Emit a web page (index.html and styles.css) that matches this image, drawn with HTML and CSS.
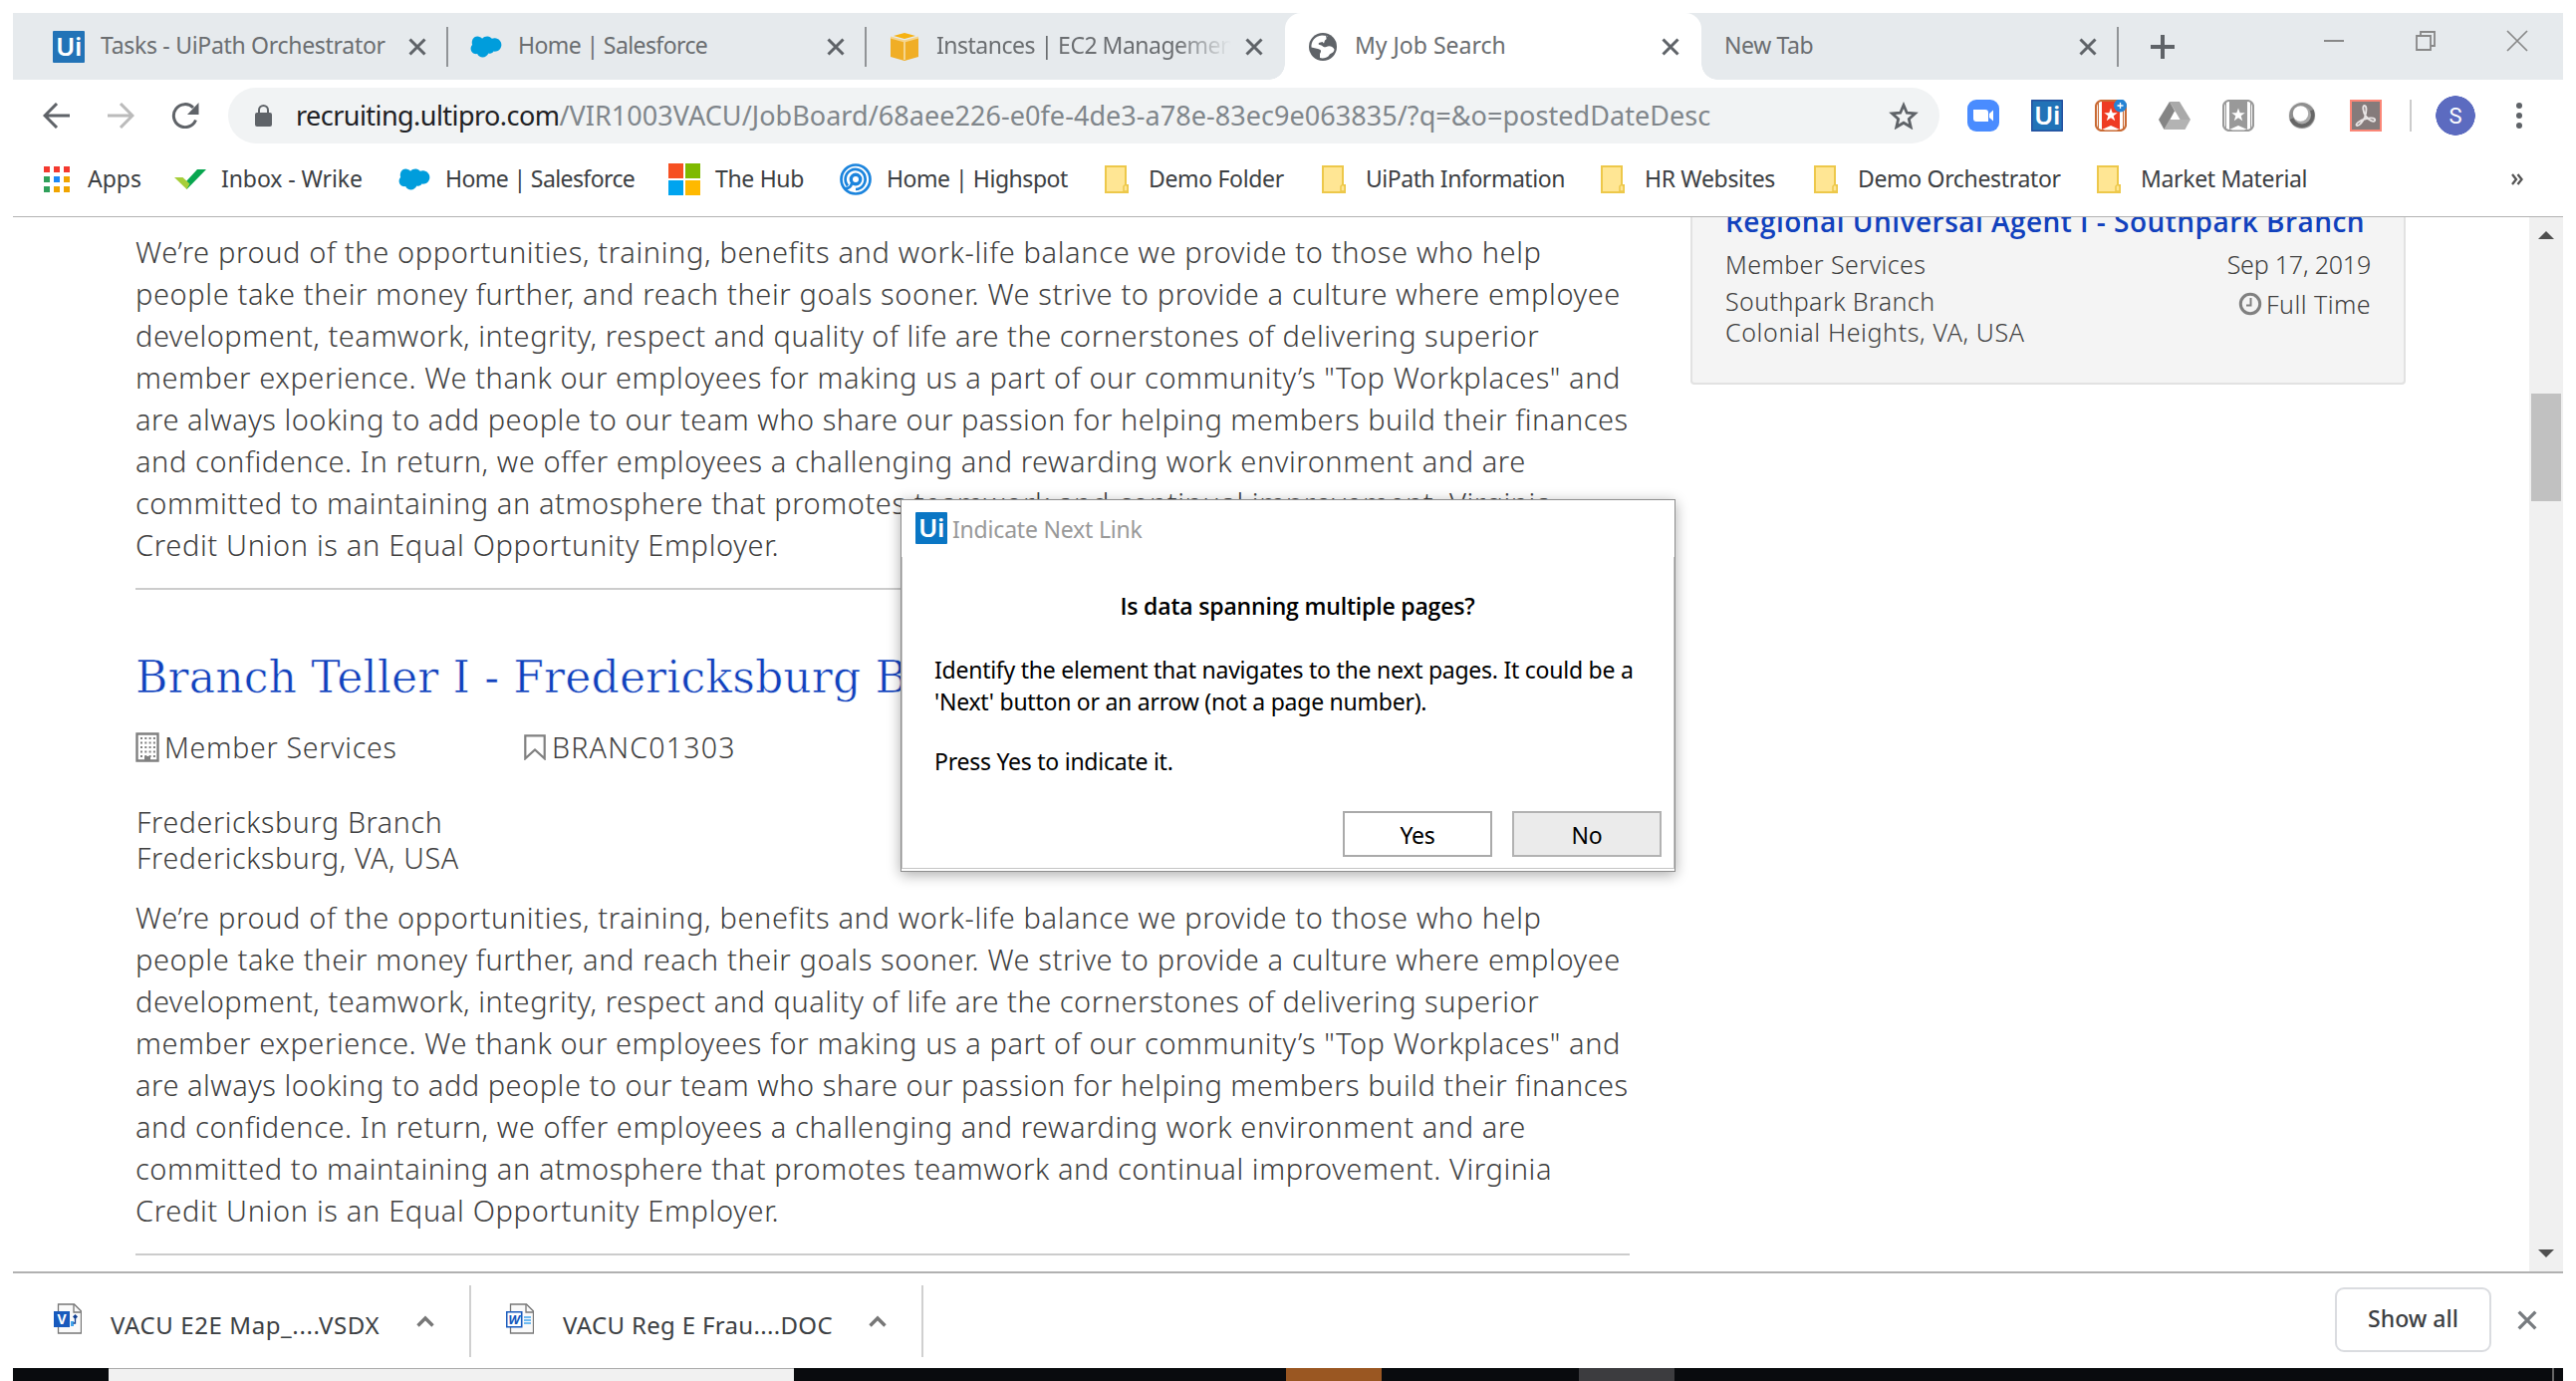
FILE: index.html
```html
<!DOCTYPE html>
<html lang="en">
<head>
<meta charset="utf-8">
<title>My Job Search</title>
<link rel="stylesheet" href="styles.css">
</head>
<body>
<svg width="0" height="0" class="defs">
  <symbol id="cross" viewBox="0 0 18 18"><path d="M1.500 1.500l15 15M16.500 1.500l-15 15" fill="none" stroke="currentColor" stroke-width="3"/></symbol>
  <symbol id="cloud" viewBox="0 0 32 24"><path d="M13.300 3.200C14.700 1.700 16.500.900 18.500 1c1.800.100 3.300 1 4.200 2.300 1-.500 2-.700 3-.600 3.500.200 6.300 3.200 6.200 7-.200 4.200-3.600 7-7.600 6.400-.900 1.800-2.900 2.700-4.900 1.900C18.500 20.200 16.300 22 13.800 22c-2.300 0-4.300-1.300-5.200-3.400C4.800 19.200 2.300 16.400 2.300 13.300c0-1.400.500-2.800 1.500-3.800C2.600 5.800 4.500 1 8.700 1c1.900.100 3.500.900 4.600 2.200z" transform="translate(-1.800 .5) scale(1.04 1)" fill="#009ddc"/></symbol>
  <symbol id="folder" viewBox="0 0 24 28"><path d="M1 1h20v19h2v7H1z" fill="#ffe694" stroke="#edc84a" stroke-width="2"/><path d="M19 26v-5l2-2 2 2v5z" fill="#ffe694" stroke="#edc84a" stroke-width="1.500"/></symbol>
  <symbol id="caret" viewBox="0 0 18 12"><path d="M1.500 10.500 9 3l7.500 7.500" fill="none" stroke="currentColor" stroke-width="3.400"/></symbol>
  <symbol id="sheet" viewBox="0 0 28 31"><path d="M4.500 1h16l7 7v22h-23z" fill="#fafafa" stroke="#777" stroke-width="1.300"/><path d="M20 1v8h7.500" fill="none" stroke="#777" stroke-width="1.300"/></symbol>
  <symbol id="wunder" viewBox="0 0 32 32"><rect x="1" y="1" width="30" height="30" rx="6" fill="#fff" stroke="var(--edge)" stroke-width="2.200"/><path d="M3.500 3v26M28.500 3v26" stroke="var(--edge)" stroke-width="1"/><path d="M7 2h18v28l-9-4-9 4z" fill="var(--fill)"/><path d="m16 8.500 1.700 4.800h5l-4 3 1.500 5-4.200-3-4.200 3 1.500-5-4-3h5z" fill="#fff"/><path d="M9 30.500 16 27l7 3.500" fill="#fff"/></symbol>
</svg>

<div class="desktop">
  <header class="tabs">
    <div class="tab tab-first"><span class="ui">Ui</span><span class="label t-tasks">Tasks - UiPath Orchestrator</span><svg class="close"><use href="#cross"/></svg></div>
    <div class="tab"><svg width="32" height="24"><use href="#cloud"/></svg><span class="label t-home">Home | Salesforce</span><svg class="close"><use href="#cross"/></svg></div>
    <div class="tab bare"><svg width="32" height="30" viewBox="0 0 32 30"><path d="M2 5.500 16 9v20L2 25zM30 5.500 16 9v20l14-4z" fill="#f0ae26"/><path d="M5 4 16 1l11 3-11 3z" fill="#f7b211"/><path d="m2 5.500 14 4 14-4M16 9v19" fill="none" stroke="#f5d58c" stroke-width="2"/></svg><span class="label fade t-ec2">Instances | EC2 Management</span><svg class="close"><use href="#cross"/></svg></div>
    <div class="tab active"><svg width="32" height="30" viewBox="0 0 32 30"><circle cx="16" cy="15" r="14" fill="#5f6368"/><path d="M15 3.500c-7 .500-11 6-10.500 12L11 17c2 .500 3.500 1 3 3l-1 2v4c3 1 7 0 9-2 1-3 5-2 5.500-6.500-2-3-5-4-8-2.500-2 1-3.500-.500-5-1.500-2.500-.500-3.500-1-2.500-2.500l3.500-1 1.500 1.500 1-3c2-1.500 4-3 2.500-4.500z" fill="#fff"/><path d="M19 3.500 25 7l2 6-4 1-4-2 1-3z" fill="#5f6368"/></svg><span class="label t-job">My Job Search</span><svg class="close"><use href="#cross"/></svg></div>
    <div class="tab last"><span class="label t-new">New Tab</span><svg class="close"><use href="#cross"/></svg></div>
    <svg class="plus" width="24" height="24" viewBox="0 0 24 24"><path d="M12 0v24M0 12h24" stroke="#5f6368" stroke-width="4"/></svg>
    <div class="window-buttons">
      <svg viewBox="0 0 20 20"><path d="M0 10h20" stroke="#888" stroke-width="2"/></svg>
      <svg viewBox="0 0 20 20"><path d="M1 5h14v14H1zM5 5V1h14v14h-4" fill="none" stroke="#888" stroke-width="1.800"/></svg>
      <svg viewBox="0 0 20 20"><path d="m0 0 20 20M20 0 0 20" stroke="#888" stroke-width="1.700"/></svg>
    </div>
  </header>

  <div class="toolbar">
    <svg class="back" viewBox="0 0 28 26"><path d="M27 13H2M14 1 2 13l12 12" fill="none" stroke="#5f6368" stroke-width="3"/></svg>
    <svg class="forward" viewBox="0 0 28 26"><path d="M1 13h25M14 1l12 12-12 12" fill="none" stroke="#bbb" stroke-width="3"/></svg>
    <svg class="reload" viewBox="0 0 28 26"><path d="M24.500 17.500A11.500 11.500 0 1 1 22 5" fill="none" stroke="#5f6368" stroke-width="3"/><path d="M27.500 0v12H16z" fill="#5f6368"/></svg>
    <div class="address">
      <svg class="lock" viewBox="0 0 17 22"><rect y="8" width="17" height="14" rx="2" fill="#5f6368"/><path d="M4 9V5.500a4.500 4.500 0 0 1 9 0V9" fill="none" stroke="#5f6368" stroke-width="2"/></svg>
      <span class="host">recruiting.ultipro.com</span><span class="path">/VIR1003VACU/JobBoard/68aee226-e0fe-4de3-a78e-83ec9e063835/?q=&amp;o=postedDateDesc</span>
      <svg class="star" viewBox="0 0 30 28"><path d="m15 3.500 3.300 7.700 8.200.700-6.200 5.500 1.900 8.100-7.200-4.300-7.200 4.300 1.900-8.100L3.500 11.900l8.200-.7z" fill="none" stroke="#5f6368" stroke-width="2.800"/></svg>
    </div>
    <div class="extensions">
      <svg viewBox="0 0 32 32"><rect width="32" height="32" rx="9" fill="#4a8cff"/><path d="M6 10h12q3 0 3 3v9H9q-3 0-3-3zM22 14l4-3.500v11L22 18z" fill="#fff"/></svg>
      <span class="ui deep">Ui</span>
      <svg class="red" viewBox="0 0 32 32"><use href="#wunder"/><circle cx="25.500" cy="6" r="6.500" fill="#2483d5"/><path d="M25.500 3v6M22.500 6h6" stroke="#fff" stroke-width="1.300"/></svg>
      <svg viewBox="0 0 32 32"><path d="M11 2h10l11 18h-10.500z" fill="#a9a9a9"/><path d="M11 2 0 20l5.500 10 11-18z" fill="#858585"/><path d="M11 20h21l-5.500 10h-21z" fill="#b3b3b3"/><path d="M16 11.500 11.500 20h9.500z" fill="#fff"/></svg>
      <svg class="grey" viewBox="0 0 32 32"><use href="#wunder"/></svg>
      <svg viewBox="0 0 32 32"><circle cx="16" cy="16" r="14" fill="#f3f3f3"/><circle cx="16" cy="16" r="13" fill="#8f8f8f"/><path d="M3.500 20A13 13 0 1 0 27.500 10z" fill="#666"/><circle cx="16" cy="15.500" r="9" fill="#aaa"/><circle cx="14.500" cy="14" r="7.700" fill="#fff"/></svg>
      <svg viewBox="0 0 32 32"><rect x="1" y="1" width="30" height="30" fill="#857b7b" stroke="#fb8677" stroke-width="2"/><path d="M14.500 6c3 0 2 7 .500 11.500-1.500 4-6 9.500-8 8.500s2-5 9.500-7c6-1.500 9.500 0 8.500 2s-6 0-9-4.500S12.500 6 14.500 6z" fill="none" stroke="#e8e4e4" stroke-width="1.900"/></svg>
    </div>
    <div class="profile">S</div>
    <svg class="menu" viewBox="0 0 8 26"><circle cx="4" cy="3" r="3"/><circle cx="4" cy="13" r="3"/><circle cx="4" cy="23" r="3"/></svg>
  </div>

  <nav class="bookmarks">
    <div class="mark"><svg width="26" height="26" viewBox="0 0 26 26"><path d="M0 0h6v6H0zM10 0h6v6h-6zM20 0h6v6h-6z" fill="#f4392f"/><path d="M0 10h6v6H0zM0 20h6v6H0z" fill="#2fa05a"/><path d="M10 10h6v6h-6z" fill="#1e88f5"/><path d="M20 10h6v6h-6zM10 20h6v6h-6zM20 20h6v6h-6z" fill="#f0a400"/></svg><span>Apps</span></div>
    <div class="mark wide"><svg width="32" height="20" viewBox="0 0 32 20"><path d="M8.500 9 12 12 23 0h9L12.500 20z" fill="#08a64f"/><path d="M0 8h8.500l7 6.500-3 5.500z" fill="#a6ce39"/></svg><span class="t-inbox">Inbox - Wrike</span></div>
    <div class="mark wide"><svg width="32" height="24"><use href="#cloud"/></svg><span class="t-home">Home | Salesforce</span></div>
    <div class="mark wide"><svg width="32" height="32" viewBox="0 0 32 32"><path d="M0 0h15v15H0z" fill="#f65022"/><path d="M17 0h15v15H17z" fill="#7fba00"/><path d="M0 17h15v15H0z" fill="#00a4ef"/><path d="M17 17h15v15H17z" fill="#ffb900"/></svg><span class="t-hub">The Hub</span></div>
    <div class="mark wide"><svg width="32" height="32" viewBox="0 0 32 32" fill="none" stroke="#1b84dd"><circle cx="16" cy="16" r="14.500" stroke-width="2.700"/><path d="M8 22.500a10 10 0 1 1 8 3.500" stroke-width="2.700"/><circle cx="16" cy="16" r="4.700" stroke-width="3.400"/><path d="M5 25q6 .500 7-5" stroke-width="2.700"/></svg><span class="t-spot">Home | Highspot</span></div>
    <div class="mark"><svg width="24" height="28"><use href="#folder"/></svg><span class="t-demo">Demo Folder</span></div>
    <div class="mark"><svg width="24" height="28"><use href="#folder"/></svg><span class="t-info">UiPath Information</span></div>
    <div class="mark"><svg width="24" height="28"><use href="#folder"/></svg><span class="t-demo">HR Websites</span></div>
    <div class="mark"><svg width="24" height="28"><use href="#folder"/></svg><span class="t-orch">Demo Orchestrator</span></div>
    <div class="mark"><svg width="24" height="28"><use href="#folder"/></svg><span class="t-orch">Market Material</span></div>
    <svg class="more" width="12" height="12" viewBox="0 0 12 12"><path d="m1 1 4 5-4 5M6.500 1l4 5-4 5" fill="none" stroke="#555" stroke-width="2.300"/></svg>
  </nav>

  <main class="page">
    <div class="jobs">
      <p class="summary">
        <span>We’re proud of the opportunities, training, benefits and work-life balance we provide to those who help</span>
        <span>people take their money further, and reach their goals sooner. We strive to provide a culture where employee</span>
        <span>development, teamwork, integrity, respect and quality of life are the cornerstones of delivering superior</span>
        <span>member experience. We thank our employees for making us a part of our community’s "Top Workplaces" and</span>
        <span>are always looking to add people to our team who share our passion for helping members build their finances</span>
        <span>and confidence. In return, we offer employees a challenging and rewarding work environment and are</span>
        <span>committed to maintaining an atmosphere that promotes teamwork and continual improvement. Virginia</span>
        <span>Credit Union is an Equal Opportunity Employer.</span>
      </p>
      <hr>
      <h2>Branch Teller I - Fredericksburg Branch</h2>
      <div class="meta">
        <svg class="building" viewBox="0 0 24 30"><path d="M1.500 1.500h21v27h-21z" fill="#fff" stroke="#808080" stroke-width="2.400"/><path d="M5 6h15M5 10.500h15M5 15h15M5 19.500h15M5 24h15" stroke="#808080" stroke-width="2" stroke-dasharray="2 2.300"/><path d="M9 24h6v5H9z" fill="#808080"/></svg>
        <span class="dept">Member Services</span>
        <svg class="ribbon" viewBox="0 0 22 26"><path d="M1.300 1.300h19.400v23L11 15.500l-9.700 8.800z" fill="none" stroke="#808080" stroke-width="2.200"/></svg>
        <span class="code">BRANC01303</span>
      </div>
      <div class="place">Fredericksburg Branch<br>Fredericksburg, VA, USA</div>
      <p class="summary">
        <span>We’re proud of the opportunities, training, benefits and work-life balance we provide to those who help</span>
        <span>people take their money further, and reach their goals sooner. We strive to provide a culture where employee</span>
        <span>development, teamwork, integrity, respect and quality of life are the cornerstones of delivering superior</span>
        <span>member experience. We thank our employees for making us a part of our community’s "Top Workplaces" and</span>
        <span>are always looking to add people to our team who share our passion for helping members build their finances</span>
        <span>and confidence. In return, we offer employees a challenging and rewarding work environment and are</span>
        <span>committed to maintaining an atmosphere that promotes teamwork and continual improvement. Virginia</span>
        <span>Credit Union is an Equal Opportunity Employer.</span>
      </p>
      <hr>
    </div>
    <aside class="card">
      <h3>Regional Universal Agent I - Southpark Branch</h3>
      <div class="row"><span>Member Services</span><span class="date">Sep 17, 2019</span></div>
      <div class="row lower">
        <div class="where">Southpark Branch<br><span class="city">Colonial Heights, VA, USA</span></div>
        <div class="hours"><svg width="24" height="24" viewBox="0 0 24 24"><circle cx="12" cy="12" r="9.700" fill="none" stroke="#808080" stroke-width="3"/><path d="M12.500 6v7.500H8" fill="none" stroke="#808080" stroke-width="2"/></svg><span>Full Time</span></div>
      </div>
    </aside>
    <div class="scrollbar">
      <svg width="16" height="8" viewBox="0 0 16 8"><path d="m8 0 8 8H0z" fill="#505050"/></svg>
      <div class="thumb"></div>
      <svg width="16" height="8" viewBox="0 0 16 8"><path d="m8 8 8-8H0z" fill="#505050"/></svg>
    </div>
  </main>

  <footer class="shelf">
    <div class="file">
      <svg class="doc" viewBox="0 0 28 31"><use href="#sheet"/><path d="M0 8h16v16H0z" fill="#185abd"/><path d="M17 18h3v5h-3z" fill="#41a5ee"/><path d="m19 13.500 2.500-2.500 2.500 2.500-2.500 2.500z" fill="#103f91"/><path d="M21.500 14v6h-2" fill="none" stroke="#103f91" stroke-width="1.300"/><text x="8" y="20.500" class="v">V</text></svg>
      <span class="t-vsdx">VACU E2E Map_....VSDX</span><svg class="caret"><use href="#caret"/></svg>
    </div>
    <div class="file">
      <svg class="doc" viewBox="0 0 28 31"><use href="#sheet"/><path d="M18 14h7M18 17h7M18 20h7" stroke="#41a5ee" stroke-width="1.400"/><path d="M.7 8.700h15v15h-15z" fill="#fff" stroke="#185abd" stroke-width="1.600"/><text x="8" y="20.500" class="v w">W</text></svg>
      <span class="t-doc">VACU Reg E Frau....DOC</span><svg class="caret"><use href="#caret"/></svg>
    </div>
    <div class="show-all">Show all</div>
    <svg class="dismiss"><use href="#cross"/></svg>
  </footer>
  <div class="taskbar"><i class="search"></i><i class="brown"></i><i class="slate"></i><i class="peek"></i></div>
</div>

<section class="dialog">
  <div class="dialog-title"><span class="ui">Ui</span><span>Indicate Next Link</span></div>
  <div class="dialog-body">
    <h4>Is data spanning multiple pages?</h4>
    <p>Identify the element that navigates to the next pages. It could be a<br>'Next' button or an arrow (not a page number).</p>
    <p class="press">Press Yes to indicate it.</p>
    <div class="actions"><button>Yes</button><button class="no">No</button></div>
  </div>
</section>
</body>
</html>
```
FILE: styles.css
```css
* { box-sizing: border-box; }
body {
  margin: 0; width: 2586px; height: 1386px; overflow: hidden; background: #fff;
  font: 23px "Noto Sans", "Open Sans", sans-serif; color: #3c4043; white-space: nowrap;
}
svg { display: block; flex: none; }
.defs { position: absolute; }
.desktop { display: flex; flex-direction: column; height: 1386px; padding: 13px 13px 0; }

.ui {
  flex: none; width: 32px; height: 32px; border-radius: 1px; background: #2273b7; color: #fff;
  font: 600 26px/31px "Noto Sans", sans-serif; text-align: center; letter-spacing: -.5px;
}
.ui.deep { box-shadow: inset 0 0 0 1.5px #24509f; }

/* tab strip */
.tabs { display: flex; align-items: center; height: 67px; background: #e6eaed; color: #6b6e71; }
.tab { display: flex; align-items: center; width: 420px; height: 67px; padding: 0 22px; position: relative; }
.tab-first { width: 437px; padding-left: 40px; }
.tab:not(.bare):not(.active)::after { content: ""; width: 2px; height: 40px; position: absolute; right: 0; background: #919497; }
.tab .label { flex: 1; margin-left: 16px; padding-bottom: 3px; overflow: hidden; }
.fade { -webkit-mask-image: linear-gradient(90deg, #000 240px, transparent 296px); mask-image: linear-gradient(90deg, #000 240px, transparent 296px); }
.close { width: 18px; height: 18px; color: #5f6368; }
.tab.active { width: 418px; background: #fff; border-radius: 16px 16px 0 0; }
.tab.active::before, .tab.active::after {
  content: ""; position: absolute; bottom: 0; width: 16px; height: 16px;
}
.tab.active::before { left: -16px; background: radial-gradient(circle at 0 0, transparent 15.5px, #fff 16px); }
.tab.active::after { right: -16px; background: radial-gradient(circle at 100% 0, transparent 15.5px, #fff 16px); }
.tab.last { width: 419px; }
.tab.last .label { margin-left: 1px; }
.plus { margin-left: 32px; }
.window-buttons { display: flex; gap: 72px; margin: 0 36px 11px auto; }
.window-buttons svg { width: 20px; height: 20px; overflow: visible; }

.t-tasks { letter-spacing: -.3px; }
.t-home { letter-spacing: -.6px; }
.t-ec2 { letter-spacing: -.5px; }
.t-new { letter-spacing: -.4px; }
.t-inbox { letter-spacing: -.08px; }
.t-hub { letter-spacing: -.33px; }
.t-spot, .t-info { letter-spacing: -.46px; }
.t-demo, .t-orch { letter-spacing: -.33px; }

/* address row */
.toolbar { display: flex; align-items: center; height: 70px; padding: 2px 40px 0 30px; }
.back { width: 28px; height: 26px; }
.forward { width: 28px; height: 26px; margin-left: 36px; }
.reload { width: 28px; height: 26px; margin-left: 37px; }
.address { display: flex; align-items: center; width: 1718px; height: 56px; margin-left: 29px; padding: 0 21px 0 27px; border-radius: 28px; background: #f1f3f4; font-size: 27px; }
.lock { width: 17px; height: 22px; margin-right: 24px; }
.host { color: #202124; letter-spacing: -.55px; padding-bottom: 2px; }
.path { color: #80868b; letter-spacing: .05px; padding-bottom: 2px; }
.star { width: 30px; height: 28px; margin-left: auto; }
.extensions { display: flex; gap: 32px; margin-left: 28px; }
.extensions svg { width: 32px; height: 32px; }
.red { --edge: #c96a34; --fill: #ee3b23; }
.grey { --edge: #999; --fill: #999; }
.profile { width: 69px; height: 40px; margin-left: 25px; padding-left: 29px; position: relative; font: 22px/41px Roboto, sans-serif; color: #fff; text-align: center; background: radial-gradient(circle at 49px 20px, #5c6bc0 19.5px, transparent 20px); }
.profile::before { content: ""; position: absolute; left: 3px; top: 4px; width: 2px; height: 32px; background: #ccc; }
.menu { width: 8px; height: 26px; margin-left: auto; fill: #5f6368; }

/* bookmarks */
.bookmarks {
  display: grid; grid-template-columns: 131px 225px 271px 172px 266px 218px 280px 214px 284px 416px 12px;
  align-items: center; height: 68px; padding: 0 0 8px 31px; border-bottom: 1px solid #b3b3b3;
}
.mark { display: grid; grid-template-columns: 44px auto; align-items: center; }
.mark.wide { grid-template-columns: 47px auto; }
.mark span { padding-bottom: 1px; }

/* page */
.page { display: flex; height: 1058px; overflow: hidden; color: #404040; font-weight: 300; }
.jobs { width: 1500px; margin-left: 123px; padding-top: 14px; }
.jobs hr { height: 2px; margin: 0; border: 0; background: #ccc; }
.summary { margin: 0 0 22px; font-size: 29px; line-height: 42px; letter-spacing: .57px; }
.summary span { display: block; }
.summary span:nth-child(1) { letter-spacing: .63px; }
.summary span:nth-child(2) { letter-spacing: .61px; }
.summary span:nth-child(3), .summary span:nth-child(5) { letter-spacing: .51px; }
.summary span:nth-child(8) { letter-spacing: .66px; }
h2 { margin: 58px 0 22px; font: 400 44.2px/60px "DejaVu Serif", serif; letter-spacing: .08px; color: #1141bd; -webkit-text-stroke: .6px #fff; }
.meta { display: flex; align-items: center; height: 36px; font-size: 28.5px; }
.building { width: 24px; height: 30px; }
.dept { width: 361px; margin-left: 5px; letter-spacing: .72px; }
.ribbon { width: 22px; height: 26px; }
.code { margin-left: 6px; letter-spacing: 1.25px; }
.place { margin: 39px 0 21px; padding-left: 1px; font-size: 28.5px; line-height: 36px; letter-spacing: .66px; }
.place + .summary { margin-bottom: 22px; }

.card { width: 718px; height: 168px; margin-left: 61px; padding: 0 33px; border: 1px solid #e2e2e2; border-width: 0 2px 2px; border-radius: 0 0 4px 4px; background: #f4f4f4; font-size: 25px; letter-spacing: .4px; }
.card h3 { margin: -14px 0 10px; font: 600 28px/36px "Open Sans", sans-serif; letter-spacing: .47px; color: #1141bd; }
.row { display: flex; justify-content: space-between; line-height: 30px; }
.date { letter-spacing: -.2px; }
.lower { margin-top: 7px; }
.where { line-height: 31px; }
.city { letter-spacing: .62px; }
.hours { display: flex; align-items: center; height: 30px; margin-top: 3px; gap: 4px; letter-spacing: .45px; }

.scrollbar { display: flex; flex-direction: column; justify-content: space-between; align-items: center; width: 34px; margin-left: auto; padding: 14px 0; background: #f0f0f0; }
.thumb { width: 30px; height: 108px; margin: 155px 0 auto; background: #c1c1c1; }

/* downloads */
.shelf { display: flex; align-items: center; height: 97px; padding: 0 26px 0 0; border-top: 2px solid #b1b1b1; font-size: 24px; }
.file { display: flex; align-items: center; width: 460px; height: 72px; padding-left: 41px; border-right: 2px solid #d0d0d0; }
.file + .file { width: 454px; padding-left: 35px; }
.doc { width: 28px; height: 31px; margin-bottom: 4px; }
.v { font: 700 14px "Open Sans", sans-serif; fill: #fff; text-anchor: middle; }
.w { font-style: italic; font-size: 13px; fill: #185abd; }
.file span { width: 307px; margin-left: 29px; padding-top: 7px; }
.t-vsdx { letter-spacing: .6px; }
.t-doc { letter-spacing: .33px; }
.caret { width: 18px; height: 12px; color: #777; }
.show-all { width: 157px; height: 65px; margin: 0 0 2px auto; border: 2px solid #dadce0; border-radius: 9px; font: 500 23px/59px "Noto Sans", sans-serif; text-align: center; }
.dismiss { width: 20px; height: 20px; margin: 0 0 2px 26px; color: #777b7f; }

.taskbar { display: flex; height: 13px; background: #090b0e; }
.search { width: 688px; margin-left: 96px; background: #f1f1f1; border-top: 1px solid #aaa; }
.brown { width: 96px; margin-left: 494px; background: #9a5722; }
.slate { width: 96px; margin-left: 198px; background: #3c3c3f; }
.peek { width: 2px; margin-left: auto; margin-right: 9px; background: #666; }

/* prompt over the page */
.dialog { position: absolute; left: 904px; top: 501px; width: 778px; height: 374px; display: flex; flex-direction: column; background: #fff; border: 1px solid #8e8e8e; box-shadow: 0 3px 13px rgba(0,0,0,.33); color: #000; }
.dialog-title { display: flex; gap: 5px; align-items: center; height: 57px; padding: 0 0 0 14px; color: #999; letter-spacing: -.2px; }
.dialog-title .ui { background: #0a76c4; margin-bottom: 1px; }
.dialog-body { flex: 1; margin-bottom: 2px; padding: 33px 12px 0 32px; border: solid #c4c4c4; border-width: 0 1px 1px; letter-spacing: -.25px; line-height: 32px; }
.dialog h4 { margin: 0 0 32px; font: 600 23px/32px "Open Sans", sans-serif; letter-spacing: -.18px; text-align: center; padding-right: 1px; }
.dialog p { margin: 0; }
.dialog .press { margin-top: 28px; }
.actions { display: flex; justify-content: flex-end; gap: 20px; margin-top: 34px; }
.actions button { width: 150px; height: 46px; padding: 2px 0 0; border: 2px solid #aaa; background: #fff; font: 23px "Noto Sans", sans-serif; letter-spacing: -.25px; color: #000; }
.actions .no { background: #ebebeb; border-color: #b2b2b2; }
```
